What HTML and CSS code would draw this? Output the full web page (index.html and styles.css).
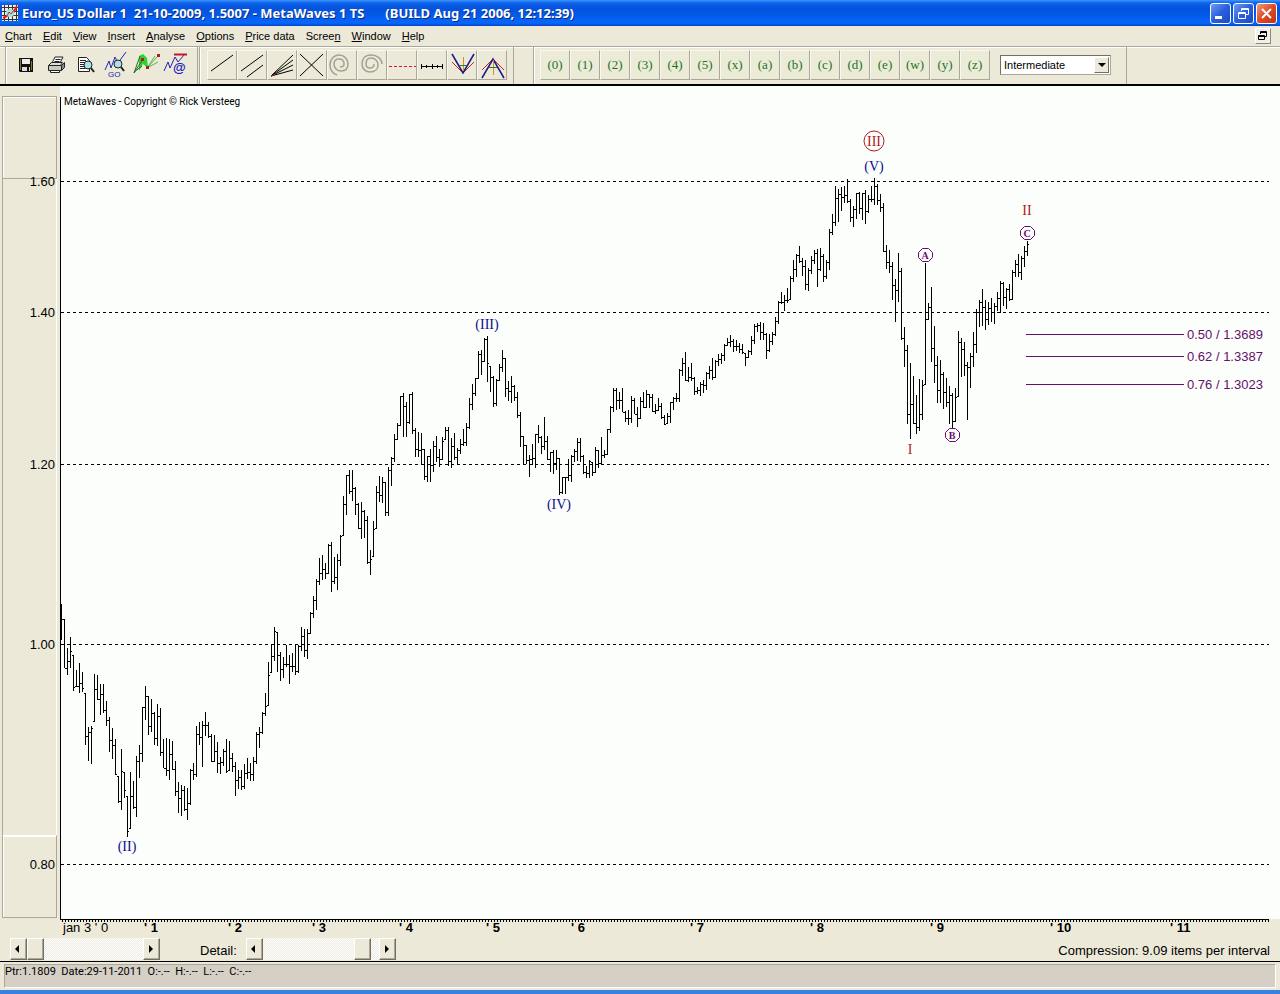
FILE: index.html
```html
<!DOCTYPE html>
<html lang="en">
<head>
<meta charset="utf-8">
<title>MetaWaves 1 TS</title>
<link rel="stylesheet" href="styles.css">
</head>
<body>
<header class="titlebar">
  <svg class="app-icon" width="16" height="16" viewBox="0 0 16 16"><path fill="#f4efe4" d="M0 0h16v16H0z"/><path stroke="#333" d="M2.5 0v16M6.5 0v16M10.5 0v16M14.5 0v16M0 2.5h16M0 6.5h16M0 10.5h16M0 14.5h16"/><path d="M1 13l4-2 3-5 3 2 4-7" fill="none" stroke="#d22" stroke-width="2"/><circle cx="8" cy="8" r="4" fill="#9fe3e6"/><path d="M5 11l2-4 2 2 3-4" fill="none" stroke="#b33"/></svg>
  <h1 class="title">Euro_US Dollar 1  21-10-2009, 1.5007 - MetaWaves 1 TS     <span class="build">(BUILD Aug 21 2006, 12:12:39)</span></h1>
  <div class="window-buttons">
    <button class="win-btn" aria-label="Minimize"><svg width="19" height="19"><path fill="#fff" d="M4 12h7v3H4z"/></svg></button>
    <button class="win-btn" aria-label="Restore"><svg width="19" height="19" fill="none" stroke="#fff"><path d="M7.5 7V4.500h7v6H12M7 5.500h8M4.500 8.500h7v6h-7zM4 9.500h8"/></svg></button>
    <button class="win-btn win-close" aria-label="Close"><svg width="19" height="19"><path d="M5 5l9 9M14 5l-9 9" stroke="#fff" stroke-width="2"/></svg></button>
  </div>
</header>

<nav class="menubar">
  <button class="menu"><u>C</u>hart</button>
  <button class="menu"><u>E</u>dit</button>
  <button class="menu"><u>V</u>iew</button>
  <button class="menu"><u>I</u>nsert</button>
  <button class="menu"><u>A</u>nalyse</button>
  <button class="menu"><u>O</u>ptions</button>
  <button class="menu"><u>P</u>rice data</button>
  <button class="menu">Scree<u>n</u></button>
  <button class="menu"><u>W</u>indow</button>
  <button class="menu"><u>H</u>elp</button>
  <button class="mdi-restore" aria-label="Restore chart"><svg width="12" height="12" fill="none" stroke="#000"><path d="M3.500 4V1.500h6v5H8M3 2.500h7M1.500 5.500h6v4h-6zM1 6.500h7"/></svg></button>
</nav>

<div class="toolbar">
  <div class="group files">
    <button class="plain" aria-label="Save"><svg width="28" height="28"><path d="M7 7h14v14H8l-1-1z" fill="#111"/><path d="M10 8h8v5h-8z" fill="#eee"/><path d="M10 16h8v4h-8z" fill="#ddd"/><path d="M15 16h2v4h-2z" fill="#111"/><path d="M8 8h1v11H8zM19 10h1v9h-1z" fill="#887a2c"/></svg></button>
    <button class="plain" aria-label="Print"><svg width="28" height="28" stroke="#222"><path d="M10 12l3-6h8l-3 6z" fill="#fff"/><path d="M13.500 8.500h5M12.500 10.500h5" /><path d="M6.500 14.500l3-3h11l-2 3z" fill="#ddd"/><path d="M6.500 14.500h13v5h-13z" fill="#c9c9c2"/><path d="M19.500 14.500l3-3v5l-3 3z" fill="#888"/><path d="M8.500 19.500h9v2h-9z" fill="#fff"/></svg></button>
    <button class="plain" aria-label="Print preview"><svg width="28" height="28" stroke="#222"><path d="M6.500 6.500h8l3 3v11h-11z" fill="#fff"/><path d="M8 9.500h6M8 11.500h7M8 13.500h5M8 15.500h5M8 17.500h5"/><circle cx="16" cy="14" r="4" fill="#a9e3e8"/><path d="M19 17l3 4" stroke-width="2"/></svg></button>
    <button class="plain" aria-label="Go to wave"><svg width="28" height="28" fill="none"><path d="M3 19l4-9 2 7 4-11 3 6 8-11" stroke="#2424b4"/><circle cx="16" cy="13" r="4" fill="#a9e3e8" stroke="#222"/><path d="M19 16l3 4" stroke="#222" stroke-width="2"/><text class="go-text" x="6" y="26">GO</text></svg></button>
    <button class="plain" aria-label="Fan targets"><svg width="28" height="28" fill="none"><path d="M7 5l4-2 4 4 1 10-5-4-4 7z" fill="#2bd52b"/><path d="M2 22l9-14M2 21l8-6M2 22l6-17" stroke="#276b27"/><path d="M11 8l4 9 11-12M15 17l8-12M15 17l11-6" stroke="#53b653"/><path fill="#a32222" d="M9 7h3v3H9zM14 15h3v3h-3zM25 3h3v3h-3z"/></svg></button>
    <button class="plain" aria-label="Wave mail"><svg width="28" height="28" fill="none"><path d="M2 20l4-9 2 6 5-11 3 5 6-7" stroke="#2424b4"/><path d="M12 3.500h13" stroke="#c9152c" stroke-width="2"/><text class="at-text" x="11" y="21">@</text></svg></button>
  </div>
  <div class="group tools">
    <button class="tool" aria-label="Trend line"><svg width="28" height="28"><path d="M3 20L25 4" stroke="#000"/></svg></button>
    <button class="tool" aria-label="Parallel lines"><svg width="28" height="28" stroke="#000"><path d="M3 20L25 4M9 26L25 14"/></svg></button>
    <button class="tool" aria-label="Fan"><svg width="28" height="28" stroke="#000"><path d="M3 25L25 4M3 25L25 9M3 25L25 14M3 25L25 19"/><path d="M3 25l4-2" stroke="#b22"/></svg></button>
    <button class="tool" aria-label="Cross"><svg width="28" height="28" stroke="#000"><path d="M2 3L25 25M25 3L2 25"/></svg></button>
    <button class="tool" aria-label="Spiral left"><svg width="28" height="28" fill="none" stroke="#a3a296" stroke-width="1.500"><path d="M9 24C5 23 2 19 2 14C2 8 6 4 11 4C16 4 20 8 20 13C20 18 17 20 13 20C9 20 6 17 6 13C6 10 8 8 11 8C14 8 16 10 16 13C16 15 14 16 12 16"/></svg></button>
    <button class="tool" aria-label="Spiral right"><svg width="28" height="28" fill="none" stroke="#a3a296" stroke-width="1.500"><path d="M24 13C24 8 19 4 13 4C7 4 4 8 4 13C4 18 8 21 12 21C17 21 20 18 20 14C20 10 17 7 13 7C10 7 8 9 8 13C8 16 10 17 12 17C15 17 16 15 16 13"/></svg></button>
    <button class="tool" aria-label="Horizontal level"><svg width="28" height="28"><path d="M1 15.500h27" stroke="#d01830" stroke-dasharray="3 2"/></svg></button>
    <button class="tool" aria-label="Time ruler"><svg width="28" height="28"><path d="M3 15.500h22M3.500 13v5M8.500 14v3M14.500 13v5M19.500 14v3M24.500 13v5" stroke="#000"/></svg></button>
    <button class="tool" aria-label="Fork down"><svg width="28" height="28" fill="none"><path d="M4 11l11 11 11-11" stroke="#c02828"/><path d="M4 3l11 19L26 3" stroke="#1a1a8c" stroke-width="1.500"/><path d="M15.500 6v14" stroke="#d98c22"/><path d="M11 14.500h8" stroke="#228022"/></svg></button>
    <button class="tool" aria-label="Fork up"><svg width="28" height="28" fill="none"><path d="M4 19L15 8l11 11" stroke="#c02828"/><path d="M4 27L15 8l11 19" stroke="#1a1a8c" stroke-width="1.500"/><path d="M15.500 9v15" stroke="#d98c22"/><path d="M11 16.500h8" stroke="#228022"/></svg></button>
  </div>
  <div class="group waves">
    <div class="wave-row">
      <button class="tool">(0)</button><button class="tool">(1)</button><button class="tool">(2)</button><button class="tool">(3)</button><button class="tool">(4)</button><button class="tool">(5)</button><button class="tool">(x)</button><button class="tool">(a)</button><button class="tool">(b)</button><button class="tool">(c)</button><button class="tool">(d)</button><button class="tool">(e)</button><button class="tool">(w)</button><button class="tool">(y)</button><button class="tool">(z)</button>
    </div>
    <div class="degree">
      <select aria-label="Wave degree"><option>Intermediate</option></select>
      <svg class="degree-arrow" width="15" height="16"><path d="M3 5h8L7 9z"/></svg>
    </div>
  </div>
</div>

<main class="chart">
  <div class="scale"><div class="band band-top"></div><div class="band band-mid"></div><div class="band band-low"></div></div>
  <div class="paper"></div>
  <svg class="plot" role="img" aria-label="Euro / US Dollar price chart">
    <defs><pattern id="ticks" width="3" height="4" patternUnits="userSpaceOnUse"><path d="M2 0h1v4H2z"/></pattern></defs>
    <g transform="translate(0 -86)">
      <g class="grid">
        <line x1="61" x2="100%" y1="181.500" y2="181.500"/><line x1="61" x2="100%" y1="312.500" y2="312.500"/><line x1="61" x2="100%" y1="464.500" y2="464.500"/><line x1="61" x2="100%" y1="644.500" y2="644.500"/><line x1="61" x2="100%" y1="864.500" y2="864.500"/>
      </g>
      <path d="M60 97h1v823h-1z"/>
      <rect x="60" y="919" width="100%" height="1"/>
      <rect x="61" y="919" width="100%" height="3" fill="url(#ticks)"/>
      <path id="bars"/>
      <g class="price">
        <text x="55" y="186">1.60</text><text x="55" y="317">1.40</text><text x="55" y="469">1.20</text><text x="55" y="649">1.00</text><text x="55" y="869">0.80</text>
      </g>
      <g class="year">
        <text class="first" x="63" y="932">jan 3 ' 0</text>
        <text x="144" y="932">' 1</text><text x="228" y="932">' 2</text><text x="312" y="932">' 3</text><text x="399" y="932">' 4</text><text x="486" y="932">' 5</text><text x="571" y="932">' 6</text><text x="690" y="932">' 7</text><text x="810" y="932">' 8</text><text x="930" y="932">' 9</text><text x="1050" y="932">' 10</text><text x="1170" y="932">' 11</text>
      </g>
      <text class="copyright" x="64" y="105">MetaWaves - Copyright © Rick Versteeg</text>
      <g class="wave blue">
        <text x="127" y="851">(II)</text><text x="487" y="329">(III)</text><text x="559" y="509">(IV)</text><text x="874" y="171">(V)</text>
      </g>
      <g class="wave red">
        <circle cx="874" cy="141" r="10"/><text x="874" y="146">III</text><text x="910" y="454">I</text><text x="1027" y="215">II</text>
      </g>
      <g class="wave purple">
        <path d="M922.500 248.500h6l4 4v5l-4 4h-6l-4-4v-5z"/><text x="925" y="259">A</text>
        <path d="M949.500 428.500h6l4 4v5l-4 4h-6l-4-4v-5z"/><text x="952" y="439">B</text>
        <path d="M1024.500 226.500h6l4 4v5l-4 4h-6l-4-4v-5z"/><text x="1027" y="237">C</text>
      </g>
      <g class="retrace">
        <path d="M1026 334h158v1h-158zM1026 356h158v1h-158zM1026 384h158v1h-158z"/>
        <text x="1187" y="339">0.50 / 1.3689</text><text x="1187" y="361">0.62 / 1.3387</text><text x="1187" y="389">0.76 / 1.3023</text>
      </g>
    </g>
  </svg>
</main>

<div class="controls">
  <div class="scroller scroll-time">
    <button class="arrow" aria-label="Earlier"><svg width="14" height="18"><path d="M8 5v8L4 9z"/></svg></button>
    <input type="range" aria-label="Time position" min="0" max="100" value="0">
    <button class="arrow" aria-label="Later"><svg width="14" height="18"><path d="M5 5v8l4-4z"/></svg></button>
  </div>
  <label class="detail-label" for="detail">Detail:</label>
  <div class="scroller scroll-detail">
    <button class="arrow" aria-label="Less detail"><svg width="14" height="18"><path d="M8 5v8L4 9z"/></svg></button>
    <input id="detail" type="range" min="0" max="100" value="92">
    <button class="arrow" aria-label="More detail"><svg width="14" height="18"><path d="M5 5v8l4-4z"/></svg></button>
  </div>
  <output class="compression">Compression: 9.09 items per interval</output>
</div>

<footer class="status"><div class="status-text">Ptr:1.1809  Date:29-11-2011  O:-.--  H:-.--  L:-.--  C:-.--</div></footer>
<script src="chart.js"></script>
</body>
</html>
```
FILE: styles.css
```css
* { box-sizing: border-box; }
body {
  margin: 0;
  min-height: 100vh;
  display: flex;
  flex-direction: column;
  background: #ece9d8;
  color: #000;
  font: 11px/14px "Liberation Sans", Arial, sans-serif;
  border-bottom: 4px solid #3a80e0;
}
button { font: inherit; color: inherit; border: 0; padding: 0; background: none; }
svg { display: block; }

.titlebar {
  display: flex;
  align-items: center;
  height: 26px;
  padding: 0 3px 0 2px;
  background: linear-gradient(#3b96ff 0, #0f62ea 3px, #0453dc 8px, #0458e6 14px, #0667fb 22px, #0560f0 24px, #0340c0 26px);
}
.title {
  flex: 1;
  margin: 0 0 0 4px;
  color: #fff;
  font: bold 13px/18px "Noto Sans", sans-serif;
  white-space: pre;
  text-shadow: 1px 1px #0a2a88;
}
.build { margin-left: 4px; }
.window-buttons { display: flex; gap: 2px; }
.win-btn {
  width: 21px;
  height: 21px;
  border: 1px solid #fff;
  border-radius: 3px;
  background: linear-gradient(135deg, #6d9cf5, #2a5fdc 50%, #1a4bc4);
}
.win-close { background: linear-gradient(135deg, #f09a7c, #dc4c26 50%, #c03210); }

.menubar {
  display: flex;
  align-items: center;
  gap: 11px;
  height: 20px;
  padding: 0 9px 0 5px;
}
.mdi-restore {
  margin-left: auto;
  padding: 1px;
  border: 1px solid;
  border-color: #fff #8b887c #8b887c #fff;
  background: #f2f0e6;
}

.toolbar {
  display: flex;
  height: 40px;
  border-top: 1px solid #aca899;
  border-bottom: 2px solid #000;
  box-shadow: inset 0 1px #fff;
  padding-left: 5px;
}
.group { display: flex; align-items: center; border-left: 1px solid #aca899; box-shadow: inset 1px 0 #fff; padding-bottom: 1px; }
.files { width: 193px; padding-left: 6px; gap: 2px; border-right: 1px solid #aca899; }
.plain { width: 28px; }
.tools { width: 315px; padding-left: 7px; border-right: 1px solid #aca899; margin-left: 1px; }
.waves { width: 594px; margin-left: 19px; padding-left: 6px; border-right: 1px solid #aca899; }
.tool {
  width: 30px;
  height: 30px;
  border: 1px solid;
  border-color: #f8f7f0 #aca899 #aca899 #f8f7f0;
}
.wave-row { display: flex; }
.wave-row .tool { color: #1f731f; font: 13px/26px "Liberation Serif", serif; background: #ebebd8; }
.degree { position: relative; margin-left: 10px; }
.degree select {
  display: block;
  width: 111px;
  height: 20px;
  padding: 0 18px 0 3px;
  border: 1px solid;
  border-color: #716f64 #aca899 #aca899 #716f64;
  border-radius: 0;
  background: #fff;
  color: #000;
  font: inherit;
  appearance: none;
}
.degree-arrow {
  position: absolute;
  right: 2px;
  top: 2px;
  background: #ece9d8;
  border: 1px solid;
  border-color: #fff #716f64 #716f64 #fff;
  pointer-events: none;
}
.go-text { font: 8px "Liberation Sans", sans-serif; fill: #2222a8; }
.at-text { font: bold 13px "Liberation Sans", sans-serif; fill: #1414c0; }

.chart {
  flex: 1;
  min-height: 850px;
  display: grid;
  grid-template: 833px 1fr / 60px 1fr;
}
.scale { grid-area: 1 / 1; display: flex; flex-direction: column; padding: 10px 3px 1px 2px; }
.band { border: 1px solid #aca899; box-shadow: inset 1px 1px #fff; }
.band-top { flex: 81; }
.band-mid { flex: 658; border-top: 0; border-bottom: 0; box-shadow: none; border-right-color: #fff; }
.band-low { flex: 81; border-top-color: #fff; }
.paper { grid-area: 1 / 2; background: #fcfefb; }
.plot { grid-area: 1 / 1 / 3 / 3; width: calc(100% - 11px); height: 100%; overflow: hidden; font: 13px "Liberation Sans", Arial, sans-serif; }
.grid line { stroke: #000; stroke-dasharray: 3 3; }
.price text { text-anchor: end; }
.year { font-weight: bold; }
.year .first { font-weight: normal; }
.copyright { font: 10px Roboto, "Liberation Sans", sans-serif; }
.wave { font: 14px "Liberation Serif", serif; text-anchor: middle; }
.wave circle, .wave path { fill: none; stroke: currentColor; }
.wave text { fill: currentColor; }
.blue { color: #0d0d8a; }
.red { color: #b01c22; }
.purple { color: #650f6d; font: bold 10px "Liberation Serif", serif; }
.retrace { fill: #650f6d; }

.controls {
  display: flex;
  align-items: center;
  height: 25px;
  padding: 1px 10px;
  border-bottom: 1px solid #000;
  font: 13px/18px "Liberation Sans", Arial, sans-serif;
}
.scroller { display: flex; width: 150px; height: 22px; }
.arrow, .scroller input::-webkit-slider-thumb {
  width: 17px;
  height: 22px;
  border: 1px solid;
  border-color: #fff #716f64 #716f64 #fff;
  background: #ece9d8;
  box-shadow: inset -1px -1px #aca899;
}
.arrow { flex: none; }
.scroller input { flex: 1; min-width: 0; height: 22px; margin: 0; appearance: none; background: repeating-conic-gradient(#fff 0 25%, #edebdf 0 50%) 0 0 / 2px 2px; }
.scroller input::-webkit-slider-thumb { appearance: none; }
.detail-label { width: 46px; margin-left: 40px; padding-top: 4px; }
.compression { margin-left: auto; padding-top: 4px; }

.status { padding: 2px 4px; }
.status-text {
  height: 24px;
  border: 1px solid;
  border-color: #aca899 #fff #fff #aca899;
  background: #d6cfc6;
  font: 11px/13px Roboto, "Liberation Sans", sans-serif;
  white-space: pre;
}
```
FILE: chart.js
```js
// Weekly bars as [high, low, close], in thirds of a pixel below each run's base line.
const runs = [
  { x: 61, base: 590, bars: [
    [42,150,88],[87,235,235],[174,257,215],[142,234,185],[195,305,292],[240,291,288],[219,311,280],[248,308,295],
    [309,467,438],[411,515,428],[408,524,415],[252,398,298],[255,332,328],[282,377,312],[282,371,360],[333,410,392],
    [381,488,450],[414,507,465],[447,555,552],[558,641,635],[477,662,545],[546,626,602],[618,741,725],[546,717,620],
    [573,657,652],[498,683,515],[465,566,490],[351,516,352],[288,390,320],[320,437,408],[327,428,370],[366,467,445],
    [342,470,380],[354,500,488],[447,536,536],[445,560,540],[447,570,492],[453,540,538],[513,620,605],[576,669,625],
    [585,678,600],[588,663,658],[594,690,640],[537,645,540],[519,570,552],[408,563,433],[396,467,443],[393,533,405],
    [366,440,405],[396,446,440],[432,518,515],[435,517,483],[456,551,520],[501,554,517],[477,530,485],[447,551,545],
    [453,545,505],[489,546,528],[516,618,572],[540,599,563],[540,600,590],[522,599,550],[504,567,548],[519,573,553],
    [501,573,515],[426,522,432],[411,474,426],[366,434,370],[309,378,350],[216,350,255],[165,249,200],[111,213,125],
    [126,246,197],[186,273,237],[201,264,222],[165,231,222],[195,282,228],[189,246,228],[165,255,245],[165,249,168],
    [111,183,140],[119,201,180],[119,207,130],[66,132,70] ] },
  { x: 313, base: 380, bars: [
    [648,714,662],[597,690,605],[534,615,580],[525,602,568],[549,599,580],[492,584,495],[486,638,605],[531,614,592],
    [522,632,540],[465,560,468],[348,470,372],[285,407,287],[270,342,333],[270,365,325],[321,407,373],[369,449,445],
    [366,479,395],[390,476,420],[408,554,548],[510,585,538],[423,532,447],[318,447,338],[288,368,345],[291,371,308],
    [306,410,398],[261,410,272],[231,318,235],[162,248,178],[129,182,135],[50,138,50],[39,173,80],[66,171,128],
    [42,132,44],[36,164,152],[144,231,208],[156,231,210],[159,252,208],[207,302,288],[228,308,230],[207,308,255],
    [183,278,200],[168,248,232],[207,263,238],[171,240,183],[141,180,150],[141,258,243],[174,264,198],[159,240,232],
    [204,252,210],[177,224,192],[147,200,186],[129,200,143],[54,147,72],[12,92,40] ] },
  { x: 475, base: 310, bars: [
    [204,260,205],[123,207,132],[120,197,155],[84,156,88],[78,218,160],[168,246,202],[198,291,280],[207,288,210],
    [162,213,172],[120,188,145],[144,261,235],[213,275,245],[198,281,230],[225,273,262],[246,324,315],[306,411,380],
    [378,462,405],[405,462,450],[435,501,447],[402,465,445],[372,474,372],[345,399,383],[378,434,408],[321,420,393],
    [378,450,448],[426,488,428],[420,494,460],[420,482,445],[444,555,548],[501,552,502],[501,552,503],[447,514,495],
    [435,518,440],[417,456,425],[384,453,397],[384,458,440],[435,492,487],[468,504,490],[450,506,455],[456,500,487],
    [411,489,420],[420,476,460],[381,462,435],[420,446,433],[357,435,357],[288,371,293],[234,306,242],[234,300,270],
    [246,297,270],[234,308,308],[303,338,325],[300,347,325],[258,339,270],[264,314,312],[291,353,325],[261,329,275],
    [246,294,292],[240,294,252],[252,294,262],[252,308,303],[282,314,300],[264,305,290],[279,327,322],[315,347,342],
    [309,344,320],[276,339,278],[261,302,265],[249,278,266],[177,276,180],[144,198,160],[126,215,210],[171,216,203],
    [159,213,205],[201,257,245],[231,252,240],[216,258,222],[210,249,225],[186,242,190],[168,209,180],[144,212,203],
    [150,204,153],[132,168,148],[129,164,135],[102,153,105],[84,108,97],[75,111,95],[87,126,110],[90,123,108],
    [99,129,117],[102,134,128],[129,170,142],[120,146,123],[78,135,92],[42,102,48],[39,66,47],[36,92,68],
    [39,90,72],[69,147,122] ] },
  { x: 769, base: 120, bars: [
    [642,698,665],[636,675,642],[591,650,605],[543,614,546],[516,552,548],[525,575,542],[504,551,542],[468,542,475],
    [420,488,447],[402,471,405],[378,431,425],[414,470,440],[420,510,493],[444,515,452],[408,462,422],[390,434,400],
    [387,503,448],[384,455,410],[402,488,470],[420,479,427],[327,452,337],[282,347,307],[198,320,235],[207,308,222],
    [201,275,233],[198,251,225],[177,251,243],[237,306,292],[258,321,268],[219,299,219],[216,284,265],[219,302,220],
    [210,314,273],[225,281,237],[198,248,238],[174,257,200],[192,257,242],[222,276,262],[249,398,393],[375,449,428],
    [390,461,440],[426,540,497],[477,606,512],[399,548,455],[444,662,655],[621,741,692],[675,914,884],[729,957,852],
    [768,914,910],[825,942,922],[777,933,884],[780,902,795],[429,797,597],[549,600,562],[501,728,685],[618,791,737],
    [708,851,812],[720,851,762],[756,867,818],[774,863,847],[798,912,825],[819,924,905],[804,908,833],[633,833,668],
    [654,773,687],[666,770,737],[726,902,743],[699,806,708],[636,743,672],[567,701,578],[540,623,548],[507,620,562],
    [540,632,597],[546,615,565],[534,606,578],[549,614,560],[516,573,535],[483,581,490],[486,560,532],[504,569,507],
    [492,545,538],[450,540,457],[420,471,432],[402,471,458],[408,480,415],[378,441,393],[363,408,372] ] }
];

let d = "";
let previous = null;
for (const run of runs) {
  run.bars.forEach((bar, i) => {
    const x = run.x + i * 3;
    const [high, low, close] = bar.map(v => run.base + Math.floor(v / 3));
    const open = Math.min(low - 1, Math.max(high, previous === null ? close : previous));
    d += `M${x} ${high}h1V${low}h-1zM${x + 1} ${close}h1v1h-1zM${x - 1} ${open}h1v1h-1z`;
    previous = close;
  });
}
document.getElementById("bars").setAttribute("d", d);
```
